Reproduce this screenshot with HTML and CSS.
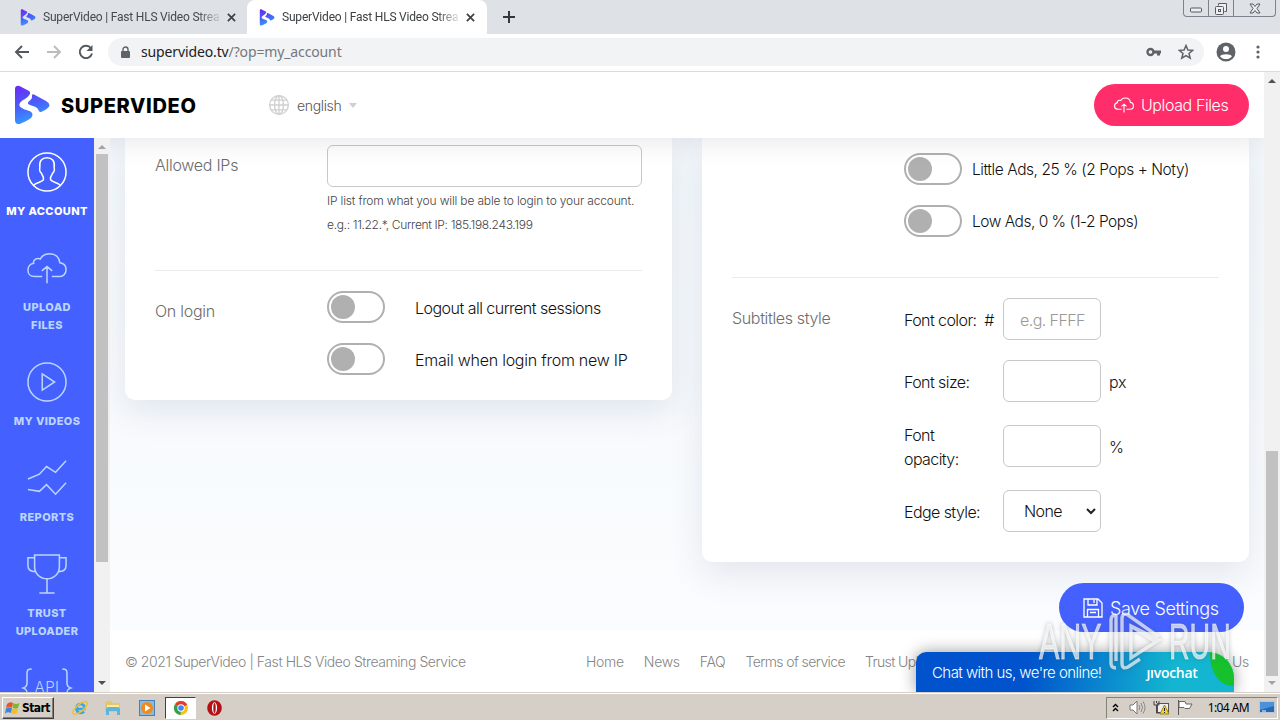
FILE: index.html
```html
<!DOCTYPE html>
<html lang="en">
<head>
<meta charset="utf-8">
<title>SuperVideo | Fast HLS Video Streaming Service</title>
<link rel="stylesheet" href="styles.css">
</head>
<body>
<svg width="0" height="0" class="defs">
  <defs>
    <linearGradient id="brand" gradientUnits="userSpaceOnUse" x1="8" y1="0" x2="20" y2="40"><stop offset="0" stop-color="#6a2cf5"/><stop offset=".5" stop-color="#4a5efb"/><stop offset="1" stop-color="#2fa8ff"/></linearGradient>
    <symbol id="logo" viewBox="0 0 36 40">
      <path fill="url(#brand)" d="M1 4C1 1 4 0 6.500 1.500L15 6C18 8 14.500 12 10 14.500C5 17.500 4 20.500 7 22.500C11 26 19 25 18.500 30C18 34 12 36 7 38.500C3 40 1 38.500 1 35Z"/>
      <path fill="url(#brand)" d="M20 9.500L32 16Q39 20 32 24.500L27 27C25 27.500 25 25.500 23.500 23.500C21 20.500 15 20.500 14 18.500C13.500 16.500 18 15 18 12C18 10 18 8.500 20 9.500Z"/>
    </symbol>
    <symbol id="cloud" viewBox="0 0 42 34"><path fill="none" stroke="currentColor" d="M16 26H8C3 26 1 22.500 1 19C1 15 4 12.500 7 12C6 8.500 10 6 14 7.500C16 3.500 19 2 24 2C30 2 34 6 34.500 11.500C39 12 41 15.500 41 19C41 23.500 37.500 26 34 26H26M21 33V16M15.500 20L21 15.500L26.500 20"/></symbol>
  </defs>
</svg>
<div class="screen">
  <div class="tabs">
    <div class="tab"><svg class="fav"><use href="#logo"/></svg><span class="tab-title">SuperVideo | Fast HLS Video Streami</span><svg class="x" viewBox="0 0 10 10"><path d="M1 1L9 9M9 1L1 9"/></svg></div>
    <div class="tab active"><svg class="fav"><use href="#logo"/></svg><span class="tab-title">SuperVideo | Fast HLS Video Streami</span><svg class="x" viewBox="0 0 10 10"><path d="M1 1L9 9M9 1L1 9"/></svg></div>
    <svg class="plus" viewBox="0 0 12 12"><path d="M6 0V12M0 6H12"/></svg>
    <div class="winbtns">
      <span class="wmin"><svg width="13" height="6"><rect x=".5" y="1" width="11" height="4" rx="1"/></svg></span>
      <span class="wmax"><svg width="14" height="14"><path d="M4.500 3.500V1.500H12.500V9.500H10.500"/><rect x="1.500" y="4.500" width="8" height="8" rx="1"/><rect x="4.500" y="7.500" width="2" height="2"/></svg></span>
      <span class="wclose"><svg width="12" height="11"><path d="M1 1H4L6 3.500L8 1H11L8 5.500L11 10H8L6 7.500L4 10H1L4 5.500Z"/></svg></span>
    </div>
  </div>
  <div class="toolbar">
    <svg class="nav" viewBox="0 0 16 16"><path d="M15 8H2M8 2L2 8L8 14"/></svg>
    <svg class="nav dim" viewBox="0 0 16 16"><path d="M1 8H14M8 2L14 8L8 14"/></svg>
    <svg class="nav" viewBox="0 0 16 16"><path d="M13 4.200A6.200 6.200 0 1 0 14 9.500"/><path class="solid" d="M14.500 1V7H8.500Z"/></svg>
    <div class="omnibox">
      <svg class="lock" width="9" height="13"><rect y="5" width="9" height="7" rx="1" fill="#5f6368"/><path d="M2 6V3.500a2.500 2.500 0 0 1 5 0V6" fill="none" stroke="#5f6368" stroke-width="1.400"/></svg>
      <span class="url"><b>supervideo.tv</b>/?op=my_account</span>
      <svg class="key" width="16" height="10"><circle cx="4.500" cy="5" r="3" fill="none" stroke="#5f6368" stroke-width="2.400"/><path d="M8 3.500H15V6.500H14V8.500H11V6.500H8Z" fill="#5f6368"/></svg>
      <svg class="star" width="16" height="16"><path d="M8 1.500L9.900 6L14.700 6.300L11 9.400L12.200 14.200L8 11.600L3.800 14.200L5 9.400L1.300 6.300L6.100 6Z" fill="none" stroke="#5f6368" stroke-width="1.500"/></svg>
    </div>
    <svg class="user" width="20" height="20"><circle cx="10" cy="10" r="9.500" fill="#5f6368"/><circle cx="10" cy="7" r="3" fill="#fff"/><path d="M4 14.200C5 11.500 15 11.500 16 14.200C13 18 7 18 4 14.200Z" fill="#fff"/></svg>
    <svg class="kebab" width="4" height="14"><circle cx="2" cy="2" r="1.600"/><circle cx="2" cy="7" r="1.600"/><circle cx="2" cy="12" r="1.600"/></svg>
  </div>
  <div class="viewport">
    <div class="site">
      <header class="head">
        <svg class="mark"><use href="#logo"/></svg>
        <span class="brand">SUPERVIDEO</span>
        <svg class="globe" viewBox="0 0 20 20"><circle cx="10" cy="10" r="8.500"/><ellipse cx="10" cy="10" rx="4" ry="8.500"/><path d="M10 1.500V18.500M1.500 10H18.500M3 5.500H17M3 14.500H17"/></svg>
        <span class="lang">english</span><i class="caret"></i>
        <span class="upload"><svg class="upicon"><use href="#cloud"/></svg><span>Upload Files</span></span>
      </header>
      <div class="body">
        <nav class="side">
          <div class="item on"><svg class="ic" viewBox="0 0 42 42"><circle cx="21" cy="21" r="20"/><path d="M7 35C9 32 15 32 17 29.500C18.500 27 16 25 15 22C13.500 21 13 18.500 13.500 16C12.500 9 16 6 21 6S29.500 9 28.500 16C29 18.500 28.500 21 27 22C26 25 23.500 27 25 29.500C27 32 33 32 35 35"/></svg><span>MY ACCOUNT</span></div>
          <div class="item"><svg class="ic" viewBox="0 -4 42 42"><path d="M16 26H8C3 26 1 22.500 1 19C1 15 4 12.500 7 12C6 8.500 10 6 14 7.500C16 3.500 19 2 24 2C30 2 34 6 34.500 11.500C39 12 41 15.500 41 19C41 23.500 37.500 26 34 26H26M21 33V16M15.500 20L21 15.500L26.500 20"/></svg><span>UPLOAD<br>FILES</span></div>
          <div class="item"><svg class="ic" viewBox="0 0 42 42"><circle cx="21" cy="21" r="20"/><path d="M16 12.500V29.500L29 21Z"/></svg><span>MY VIDEOS</span></div>
          <div class="item"><svg class="ic" viewBox="0 0 42 42"><path d="M1 22L13 17L20.500 9L30 15L41 3M1 33L13 35L20.500 28L30 38L41 26"/></svg><span>REPORTS</span></div>
          <div class="item"><svg class="ic" viewBox="0 0 42 42"><path d="M8 1H34V13C34 21 28 26 21 26S8 21 8 13ZM8 4H1V12C1 16 4 18.500 9 18.500M34 4H41V12C41 16 38 18.500 33 18.500M21 26V41M13 41H29"/></svg><span>TRUST<br>UPLOADER</span></div>
          <div class="item"><svg class="ic wide" viewBox="0 0 52 42"><path d="M10 1C6 1 5 2 5 6V16C5 19 4 20 1 21C4 22 5 23 5 27V36M42 1C46 1 47 2 47 6V16C47 19 48 20 51 21C48 22 47 23 47 27V36"/><text x="26" y="26.500" text-anchor="middle">API</text></svg></div>
        </nav>
        <div class="sbar inner"><i class="up grey"></i><i class="thumb"></i><i class="down"></i></div>
        <main class="main">
          <div class="cards">
            <section class="card left">
              <div class="row">
                <div class="label l1">Allowed IPs</div>
                <div><div class="input long"></div><p class="hint"><span class="h1">IP list from what you will be able to login to your account.</span><br><span class="h2">e.g.: 11.22.*, Current IP: 185.198.243.199</span></p></div>
              </div>
              <div class="row rule">
                <div class="label l2">On login</div>
                <div class="stack"><div class="opt far"><i class="toggle"></i><span class="o1">Logout all current sessions</span></div><div class="opt far"><i class="toggle"></i><span class="o2">Email when login from new IP</span></div></div>
              </div>
            </section>
            <section class="card right">
              <div class="row ads">
                <div class="label"></div>
                <div class="stack"><div class="opt"><i class="toggle"></i><span class="o3">Little Ads, 25 % (2 Pops + Noty)</span></div><div class="opt"><i class="toggle"></i><span class="o4">Low Ads, 0 % (1-2 Pops)</span></div></div>
              </div>
              <div class="row rule">
                <div class="label l3">Subtitles style</div>
                <div class="fields">
                  <div class="field"><span class="name">Font color: &nbsp;#</span><div class="input ph">e.g. FFFF</div></div>
                  <div class="field f2"><span class="name">Font size:</span><div class="input"></div><span class="unit">px</span></div>
                  <div class="field f3"><span class="name">Font<br>opacity:</span><div class="input"></div><span class="unit">%</span></div>
                  <div class="field f3"><span class="name">Edge style:</span><div class="input sel"><span>None</span><svg width="10" height="7"><path d="M1 1L5 5L9 1"/></svg></div></div>
                </div>
              </div>
            </section>
          </div>
          <span class="save"><svg width="20" height="20"><path d="M1 1H15L19 5V19H1ZM5 1V7H14V1M11 2V5M4.500 19V11.500H15.500V19M7 14.500H13"/></svg><span>Save Settings</span></span>
          <footer class="foot"><span class="copy">© 2021 SuperVideo | Fast HLS Video Streaming Service</span><div class="links"><span>Home</span><span>News</span><span>FAQ</span><span class="terms">Terms of service</span><span class="terms">Trust Uploader</span><span class="contact">Contact Us</span></div></footer>
        </main>
      </div>
    </div>
    <div class="sbar outer"><i class="up"></i><i class="thumb"></i><i class="down grey"></i></div>
    <div class="chat"><span>Chat with us, we're online!</span><b>ȷıvochat</b><i class="leaf"></i></div>
    <div class="wm"><span>ANY</span><svg width="56" height="62" viewBox="0 0 56 62"><path d="M9 4Q4 4 4 9V52Q4 57 9 57M9 4V50M15 12V52Q15 59 21 56L33 48M15 43V8Q15 1 21 4L52 26M24 15V47L52 29ZM24 15L49 31"/></svg><span class="run">RUN</span></div>
  </div>
  <div class="taskbar">
    <div class="start"><svg width="15" height="14"><path fill="#e4572a" d="M2 3Q5 0 8 2L7 6.500Q4 5 1 7Z"/><path fill="#7db72f" d="M8.500 2Q11 4 14.500 2L13 7Q10 8.500 7.500 6.500Z"/><path fill="#3d86d6" d="M1 7.500Q4 5.500 7 7L6 12Q3 10.500 0 12.500Z"/><path fill="#f6bd2a" d="M7.500 7Q10 9 13 7.500L12 12Q9 14 6.200 12Z"/></svg><span>Start</span></div>
    <svg class="t1" width="18" height="18"><path d="M14.500 10H5.500Q6 14 9.500 14Q12 14 13 12.500M5.500 8.500Q6 5 9.500 5Q13 5 13.800 9" fill="none" stroke="#3aa5df" stroke-width="2.600"/><ellipse cx="9" cy="9" rx="9" ry="3.500" fill="none" stroke="#e9c33d" stroke-width="1.500" transform="rotate(-40 9 9)"/></svg>
    <svg class="t2" width="18" height="16"><path fill="#e6c768" d="M1 3L3 1H7L9 3H16V12H1Z"/><path fill="#f8eaa9" d="M3 5H15V10H3Z"/><path fill="#5fb4dc" d="M2 15V9Q2 7 5 7H13Q16 7 16 9V15H13V11H5V15Z"/></svg>
    <svg class="t3" width="16" height="16"><rect x=".5" y=".5" width="15" height="15" fill="#8abbe2" stroke="#4a7fb5"/><circle cx="8" cy="8" r="6" fill="#f08a1c"/><path fill="#fff" d="M6 4.500L11.500 8L6 11.500Z"/></svg>
    <div class="tchrome"><svg width="16" height="16" viewBox="0 0 16 16"><circle cx="8" cy="8" r="7" fill="#fbc116"/><path fill="#e33b2e" d="M8 8L2 4.300A7 7 0 0 1 14.200 4.800Z"/><path fill="#2ba24c" d="M8 8L2 4.300A7 7 0 0 0 7.500 15Z"/><circle cx="8" cy="8" r="3.700" fill="#fff"/><circle cx="8" cy="8" r="2.800" fill="#4285f4"/></svg></div>
    <svg class="t5" width="15" height="16"><ellipse cx="7.500" cy="8" rx="7.300" ry="7.700" fill="#b80f14"/><ellipse cx="7.500" cy="8" rx="2.600" ry="5.700" fill="#fff"/><ellipse cx="7.500" cy="8" rx="1.200" ry="5" fill="#a31317"/></svg>
    <div class="tray">
      <svg width="7" height="9"><path d="M1 4L3.500 1.500L6 4M1 8L3.500 5.500L6 8" fill="none" stroke="#000" stroke-width="1.400"/></svg>
      <svg class="spk" width="17" height="15"><path d="M1 5H4L8 1V14L4 10H1Z" fill="#fff" stroke="#777"/><path d="M10 5Q11.500 7.500 10 10M12 3Q15 7.500 12 12M14 1.500Q18 7.500 14 13.500" fill="none" stroke="#888"/></svg>
      <svg width="17" height="16"><rect x="4.500" y="3.500" width="11" height="9" fill="#eee" stroke="#555"/><path d="M1 1V5H6V1M3.500 5V13H7M3.500 1V3" fill="none" stroke="#444"/><path d="M11.500 5L16 14H7Z" fill="#f7d52b" stroke="#9b8419"/><path d="M11.500 8V11M11.500 12V13" stroke="#222"/></svg>
      <svg width="17" height="15"><path d="M1.500 0V15" stroke="#555"/><path d="M2 1.500H8L9 4H15L12.500 8.500H8L7 7.500H2Z" fill="#fff" stroke="#666"/></svg>
      <span class="clock">1:04 AM</span>
      <svg width="16" height="13"><path d="M.5.5H15.500V11.500H.5Z" fill="#2668b4" stroke="#b9c8d8"/><path d="M1 1H15V5L1 9Z" fill="#4b91dc"/><path d="M3 10H7" stroke="#fff"/></svg>
    </div>
  </div>
</div>
</body>
</html>
```

FILE: styles.css
```css
* { box-sizing: border-box; }
body { margin: 0; overflow: hidden; font-family: Inter, "Liberation Sans", sans-serif; }
i { display: block; font-style: normal; }
svg { display: block; flex: none; }
span { white-space: nowrap; }
.defs { position: absolute; }
.screen { width: 1280px; height: 720px; display: flex; flex-direction: column; overflow: hidden; background: #fff; }

/* browser chrome */
.tabs { height: 34px; flex: none; background: #dee1e6; display: flex; align-items: flex-start; padding-left: 8px; }
.tab { height: 34px; width: 239px; display: flex; align-items: center; padding: 0 10px 0 12px; color: #45494d; }
.tab.active { background: #fff; border-radius: 8px 8px 0 0; width: 240px; color: #3c4043; }
.fav { width: 16px; height: 17px; }
.tab-title { width: 177px; margin: 0 7px 0 7px; font: 12px Roboto, sans-serif; letter-spacing: -.2px; -webkit-mask-image: linear-gradient(90deg, #000 155px, transparent 180px); mask-image: linear-gradient(90deg, #000 155px, transparent 180px); }
.x { width: 9px; height: 9px; fill: none; stroke: #3c4043; stroke-width: 1.9; }
.plus { width: 12px; height: 12px; margin: 11px 0 0 16px; stroke: #33373b; stroke-width: 2; }
.winbtns { margin-left: auto; margin-right: 4px; height: 17px; display: flex; border: 1px solid #7d838c; border-top: 0; border-radius: 0 0 4px 4px; }
.winbtns span { display: flex; justify-content: center; width: 25px; padding-top: 2px; border-right: 1px solid #7d838c; }
.winbtns .wmin { padding-top: 7px; }
.winbtns .wclose { width: 41px; padding-top: 3px; border: 0; }
.winbtns svg { fill: #eee; stroke: #555a63; }
.toolbar { height: 38px; flex: none; display: flex; align-items: center; padding: 0 20px 1px 14px; border-bottom: 1px solid #d9dbde; }
.nav { width: 16px; height: 16px; margin-right: 16px; fill: none; stroke: #54585c; stroke-width: 1.9; }
.nav.dim { stroke: #babcbe; }
.nav .solid { fill: #54585c; stroke: none; }
.omnibox { height: 28px; width: 1096px; margin-left: -2px; border-radius: 14px; background: #f1f3f4; display: flex; align-items: center; padding: 0 10px 0 13px; }
.lock { margin-right: 11px; }
.url { font: 14px "Noto Sans", sans-serif; color: #74787c; letter-spacing: -.13px; margin-right: auto; padding-bottom: 1px; }
.url b { font-weight: 400; color: #202124; }
.key { margin-right: 16px; }
.user { margin-left: 12px; }
.kebab { margin-left: auto; fill: #5f6368; }

/* page */
.viewport { height: 620px; flex: none; display: flex; position: relative; overflow: hidden; }
.site { width: 1264px; display: flex; flex-direction: column; }
.head { height: 66px; flex: none; display: flex; align-items: center; padding: 0 15px 0 14px; background: #fff; position: relative; z-index: 2; box-shadow: 0 0 30px rgba(40,40,80,.14); }
.mark { width: 36px; height: 40px; }
.brand { margin-left: 11px; width: 207px; padding-top: 1px; font-size: 20px; font-weight: 800; letter-spacing: .65px; color: #000; }
.globe { width: 22px; height: 22px; fill: none; stroke: #cfcfcf; stroke-width: 1.2; }
.lang { margin-left: 7px; font-size: 14px; font-weight: 300; letter-spacing: -.35px; color: #555; }
.caret { margin-left: 8px; border: 4px solid transparent; border-top: 5px solid #d0d0d0; border-bottom: 0; }
.upload { margin-left: auto; width: 155px; height: 42px; border-radius: 21px; background: #ff2d69; color: #fff; display: flex; align-items: center; padding-left: 20px; font-size: 16px; font-weight: 300; letter-spacing: -.4px; }
.upicon { width: 20px; height: 16px; margin-right: 7px; stroke-width: 2.400; }
.body { height: 554px; display: flex; }
.side { width: 94px; flex: none; background: #4460ff; padding-top: 14px; display: flex; flex-direction: column; gap: 28px; overflow: hidden; position: relative; z-index: 3; color: #bad5ff; }
.item { display: flex; flex-direction: column; align-items: center; gap: 10px; text-align: center; font-size: 11px; font-weight: 800; line-height: 18px; letter-spacing: .4px; }
.item.on { color: #fff; }
.ic { width: 42px; height: 40px; fill: none; stroke: currentColor; stroke-width: 1.6; }
.ic.wide { width: 52px; }
.ic text { font: 300 16px Inter, sans-serif; fill: currentColor; stroke: none; }
.sbar { width: 16px; flex: none; background: #f1f1f1; display: flex; flex-direction: column; align-items: center; position: relative; z-index: 3; }
.up { border: 4px solid transparent; border-top: 0; border-bottom: 4px solid #505050; margin-top: 7px; }
.down { border: 4px solid transparent; border-bottom: 0; border-top: 4px solid #505050; margin: auto 0 7px; }
.up.grey { border-bottom-color: #a3a3a3; }
.down.grey { border-top-color: #a3a3a3; }
.thumb { width: 12px; background: #c1c1c1; }
.inner .thumb { height: 408px; margin-top: 5px; }
.outer .thumb { height: 225px; margin-top: 368px; }
.main { width: 1154px; display: flex; flex-direction: column; background: linear-gradient(#f5f9fc 0, #fafcfe 492px, #fff 492px); position: relative; }
.cards { display: flex; align-items: flex-start; gap: 30px; padding: 0 15px; height: 445px; flex: none; }
.card { width: 547px; background: #fff; border-radius: 0 0 10px 10px; padding: 0 30px; box-shadow: 0 12px 34px rgba(60,85,120,.12); }
.left { height: 262px; padding-top: 7px; }
.right { height: 424px; padding-top: 15px; }
.row { display: flex; }
.label { width: 172px; flex: none; color: #6c6c6c; font-weight: 300; font-size: 16px; line-height: 41px; }
.l1, .l2 { letter-spacing: -.27px; }
.l3 { letter-spacing: -.34px; }
.input { width: 98px; height: 42px; border: 1px solid #c8c8c8; border-radius: 6px; display: flex; align-items: center; background: transparent; }
.input.long { width: 315px; }
.hint { margin: 2px 0 0; height: 81px; line-height: 24px; font-size: 12px; font-weight: 300; color: #444; }
.h1 { letter-spacing: -.17px; }
.h2 { letter-spacing: -.33px; }
.rule { border-top: 1px solid #eaeaea; padding-top: 20px; }
.stack { display: flex; flex-direction: column; gap: 20px; }
.opt { height: 32px; display: flex; align-items: center; gap: 10px; font-size: 16px; font-weight: 300; color: #111; }
.far { gap: 30px; }
.opt span { padding-top: 1px; }
.o1 { letter-spacing: -.52px; }
.o2 { letter-spacing: -.25px; }
.o3 { font-size: 15.5px; letter-spacing: -.43px; }
.o4 { font-size: 15.5px; letter-spacing: -.49px; }
.toggle { width: 58px; height: 32px; border: 2px solid #b0b0b0; border-radius: 16px; padding: 2px; }
.toggle::before { content: ""; display: block; width: 24px; height: 24px; border-radius: 12px; background: #b0b0b0; }
.ads { height: 124px; }
.fields { display: flex; flex-direction: column; }
.field { display: flex; align-items: center; height: 42px; font-size: 16px; font-weight: 300; line-height: 24px; color: #111; letter-spacing: -.58px; }
.f2 { margin-top: 20px; }
.f3 { margin-top: 23px; }
.name { width: 99px; padding-top: 1px; }
.field .input { margin-right: 8px; padding-top: 1px; }
.unit { letter-spacing: -.2px; padding-top: 1px; }
.field .ph { padding-left: 16px; color: #999; }
.field .sel { padding: 0 4px 0 20px; justify-content: space-between; }
.sel path { fill: none; stroke: #222; stroke-width: 2; }
.save { align-self: flex-end; margin-right: 20px; width: 185px; height: 49px; flex: none; border-radius: 25px; background: #4460ff; color: #fff; display: flex; align-items: center; gap: 7px; padding: 1px 0 0 24px; font-size: 18px; font-weight: 300; letter-spacing: -.35px; }
.save svg { fill: none; stroke: #fff; stroke-width: 1.3; }
.foot { height: 58px; flex: none; display: flex; align-items: center; justify-content: space-between; padding: 0 15px; font-size: 14px; font-weight: 300; color: #858585; }
.copy { letter-spacing: -.43px; }
.links { display: flex; width: 663px; gap: 20px; letter-spacing: -.3px; }
.terms { letter-spacing: -.6px; }
.contact { margin-left: auto; }
.chat { position: absolute; z-index: 5; left: 916px; bottom: 0; width: 318px; height: 40px; overflow: hidden; border-radius: 10px 26px 0 0; background: linear-gradient(100deg, #0053cc 35%, #13b5d0 80%); box-shadow: 0 0 16px rgba(0,0,0,.4); color: #fff; display: flex; align-items: center; padding-left: 16px; font-size: 15px; font-weight: 300; letter-spacing: -.55px; }
.chat b { margin-left: 45px; font: 600 14px "Open Sans", sans-serif; letter-spacing: -.3px; }
.leaf { position: absolute; right: 0; top: 0; width: 24px; height: 34px; background: #16c12d; border-radius: 0 26px 0 24px / 0 26px 0 34px; }
.wm { position: absolute; z-index: 6; left: 1039px; top: 538px; height: 64px; width: 195px; display: flex; align-items: center; color: rgba(255,255,255,.68); filter: drop-shadow(0 0 2px rgba(70,80,90,.5)); font: 50px "Liberation Sans", sans-serif; -webkit-text-stroke: 1px rgba(255,255,255,.5); }
.wm span { width: 68px; transform: scaleX(.61); transform-origin: 0 50%; }
.wm .run { margin-left: 6px; width: 60px; transform: scaleX(.57); }
.wm svg { fill: none; stroke: currentColor; stroke-width: 3.4; }

/* taskbar */
.taskbar { height: 28px; flex: none; background: #d5cfc7; border-top: 1px solid #d5cfc7; box-shadow: inset 0 1px #fff; display: flex; align-items: center; padding: 3px 2px 1px; position: relative; }
.start { width: 52px; height: 22px; display: flex; align-items: center; gap: 2px; padding-left: 2px; border: 1px solid; border-color: #fff #404040 #404040 #fff; box-shadow: inset -1px -1px #858078; font: 700 12px "DejaVu Sans Condensed", "DejaVu Sans", sans-serif; letter-spacing: -.6px; }
.t1 { margin-left: 17px; }
.t2 { margin-left: 15px; }
.t3 { margin-left: 17px; }
.tchrome { width: 31px; height: 22px; margin-left: 10px; background: #fff; border: 1px solid; border-color: #404040 #fff #fff #404040; display: flex; align-items: center; justify-content: center; }
.t5 { margin-left: 11px; }
.tray { margin-left: auto; width: 172px; height: 22px; display: flex; align-items: center; border: 1px solid; border-color: #858078 #fff #fff #858078; padding: 0 2px 0 5px; gap: 7px; }
.spk { margin-left: 3px; }
.clock { margin: 0 3px 0 auto; font: 12px "Noto Sans", sans-serif; letter-spacing: -.6px; }
```
